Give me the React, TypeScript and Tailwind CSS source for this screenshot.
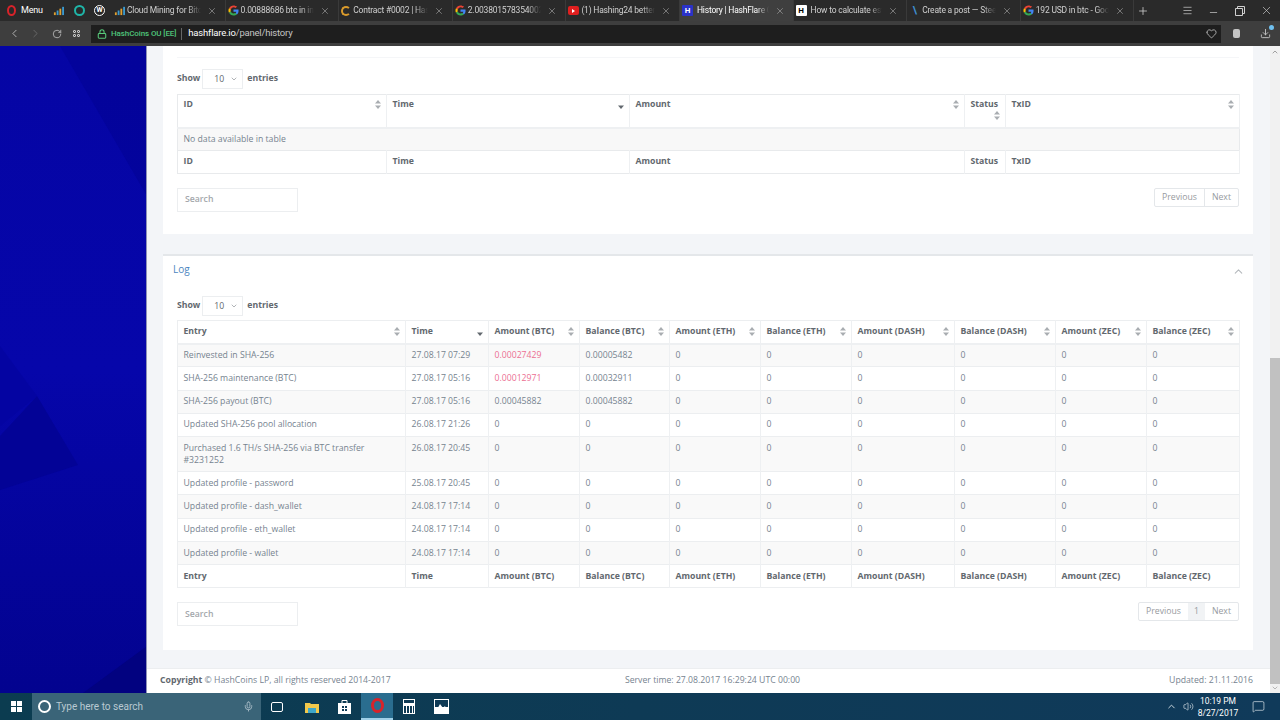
import React from "react";
import { ChevronDown, ChevronLeft, ChevronRight, ChevronUp, Download, Heart, Minus, Plus, RotateCw, Volume2, X, Mic, MessageSquare, Lock, Menu } from "lucide-react";

const GoogleIcon = () => (
	<svg width="11" height="11" viewBox="0 0 24 24" className="shrink-0">
		<path fill="#ea4335" d="M12 5c1.8 0 3.3.6 4.5 1.700l3.300-3.300C17.800 2.500 15.100 1 12 1 7.700 1 4 3.500 2.200 7.100l3.900 3C7 7.200 9.300 5 12 5z" />
		<path fill="#4285f4" d="M23 12.300c0-.8-.1-1.500-.2-2.300H12v4.500h6.200c-.3 1.400-1.100 2.600-2.300 3.400l3.600 2.800c2.200-2 3.500-5 3.500-8.400z" />
		<path fill="#fbbc05" d="M6.100 14.100C5.900 13.400 5.700 12.700 5.700 12s.2-1.400.4-2.100l-3.900-3C1.400 8.400 1 10.200 1 12s.4 3.600 1.200 5.100l3.900-3z" />
		<path fill="#34a853" d="M12 23c3 0 5.500-1 7.500-2.800l-3.600-2.800c-1 .7-2.300 1.100-3.900 1.100-2.700 0-5-1.800-5.900-4.400l-3.900 3C4 20.500 7.700 23 12 23z" />
	</svg>
);

const HashIcon = ({ dark }: { dark?: boolean }) => (
	<div className={`mr-[2px] flex h-[11px] w-[11px] shrink-0 items-center justify-center rounded-[1px] text-[8px] font-bold leading-none ${dark ? "bg-white text-black" : "bg-[#2a32c8] text-white"}`}>H</div>
);

const MiningIcon = () => (
	<svg width="11" height="11" viewBox="0 0 12 12" className="shrink-0">
		<rect x="1" y="8" width="2" height="3" fill="#e0a030" />
		<rect x="4" y="6" width="2" height="5" fill="#3a9ad0" />
		<rect x="7" y="4" width="2" height="7" fill="#e0a030" />
		<rect x="10" y="2" width="2" height="9" fill="#3a9ad0" />
	</svg>
);

const tabs = [
	{ title: "Cloud Mining for Bitc", icon: <MiningIcon /> },
	{ title: "0.00888686 btc in inr", icon: <GoogleIcon /> },
	{ title: "Contract #0002 | Hash", icon: <span className="h-[10px] w-[10px] shrink-0 rounded-full border-2 border-[#d99a2b] border-r-transparent" /> },
	{ title: "2.003801578354002/1", icon: <GoogleIcon /> },
	{ title: "(1) Hashing24 better t", icon: <span className="flex h-[9px] w-[11px] shrink-0 items-center justify-center rounded-[2px] bg-[#e01f1f]"><span className="h-0 w-0 border-y-[2px] border-l-[3px] border-y-transparent border-l-white" /></span> },
	{ title: "History | HashFlare Cl", icon: <HashIcon />, active: true },
	{ title: "How to calculate estin", icon: <HashIcon dark /> },
	{ title: "Create a post — Steer", icon: <span className="w-[11px] shrink-0 text-center text-[10px] font-bold leading-none text-[#3f8fd0]">\</span> },
	{ title: "192 USD in btc - Goog", icon: <GoogleIcon /> },
];

const SortIcon = ({ active }: { active?: boolean }) => (
	<svg width="6" height="9" viewBox="0 0 6 9" className="shrink-0">
		{!active && <path d="M3 0 6 3.500H0z" fill="#a9adb1" />}
		<path d="M3 9 0 5.500h6z" fill={active ? "#62686e" : "#a9adb1"} />
	</svg>
);

const Browser = () => (
	<div className="shrink-0 font-['Roboto',sans-serif]">
		<div className="flex h-[21px] items-center bg-[#2a2a2a] text-[8.5px] tracking-[-0.2px] text-[#cfcfcf]">
			<div className="flex w-[45px] shrink-0 items-center pl-[7px]">
				<span className="h-[11px] w-[9px] shrink-0 rounded-[50%] border-[2.5px] border-[#d8232a]" />
				<span className="ml-[5px] text-[9px] text-white">Menu</span>
			</div>
			<div className="flex w-[67px] shrink-0 items-center gap-[9.5px] pl-[8px]">
				<MiningIcon />
				<span className="h-[11px] w-[11px] shrink-0 rounded-full border-[2px] border-[#1fb5a8]" />
				<span className="flex h-[11px] w-[11px] shrink-0 items-center justify-center rounded-full border border-white text-[7px] font-bold leading-none text-white">W</span>
			</div>
			{tabs.map((tab) => (
				<div key={tab.title} className={`flex h-full w-[113.6px] shrink-0 items-center gap-[2px] border-r border-[#3a3a3a] pl-[2px] pr-[8px] ${tab.active ? "bg-[#3f3f3f] text-white" : ""}`}>
					{tab.icon}
					<span className="min-w-0 flex-1 overflow-hidden whitespace-nowrap [mask-image:linear-gradient(to_right,black_82%,transparent)]">{tab.title}</span>
					<X size={10} strokeWidth={1.5} className="ml-[4px] shrink-0 text-[#a5a5a5]" />
				</div>
			))}
			<Plus size={12} strokeWidth={1.5} className="ml-[3px] shrink-0 text-[#d8d8d8]" />
			<div className="ml-[33px] flex items-center text-[#d0d0d0]">
				<Menu size={11} strokeWidth={1.5} />
				<Minus size={11} strokeWidth={1.5} className="ml-[15px] translate-y-[2px]" />
				<svg width="10" height="10" viewBox="0 0 10 10" className="ml-[16px]" fill="none" stroke="currentColor">
					<path d="M.5 2.500h7v7h-7zM2.500 2.500v-2h7v7h-2" />
				</svg>
				<X size={13} strokeWidth={1.2} className="ml-[15px]" />
			</div>
		</div>
		<div className="flex h-[25px] items-center bg-[#3e3e3e] text-[#c8c8c8]">
			<div className="flex w-[91px] shrink-0 items-center pl-[8px]">
				<ChevronLeft size={13} strokeWidth={1.5} />
				<ChevronRight size={13} strokeWidth={1.5} className="ml-[8px] text-[#6f6f6f]" />
				<RotateCw size={10} strokeWidth={1.8} className="ml-[10px]" />
				<div className="ml-[11px] grid grid-cols-2 gap-[1px]">
					<span className="h-[3px] w-[3px] rounded-[1px] border border-[#c8c8c8]" />
					<span className="h-[3px] w-[3px] rounded-[1px] border border-[#c8c8c8]" />
					<span className="h-[3px] w-[3px] rounded-[1px] border border-[#c8c8c8]" />
					<span className="h-[3px] w-[3px] rounded-[1px] border border-[#c8c8c8]" />
				</div>
			</div>
			<div className="flex h-[18px] flex-1 items-center bg-[#1e1e1e] pl-[6px]">
				<Lock size={10} strokeWidth={2.5} className="shrink-0 text-[#58c97a]" />
				<span className="ml-[4px] text-[8px] font-medium tracking-[-0.1px] text-[#4fc47a]">HashCoins OU [EE]</span>
				<span className="ml-[5px] h-[12px] w-px bg-[#666]" />
				<span className="ml-[6px] text-[9.5px] tracking-[-0.2px] text-[#c4c4c4]"><span className="text-white">hashflare.io</span>/panel/history</span>
				<Heart size={11} strokeWidth={1.5} className="ml-auto mr-[4px] text-[#e0e0e0]" />
			</div>
			<div className="flex w-[59px] shrink-0 items-center pl-[12px]">
				<span className="h-[9px] w-[7px] rounded-[2px] bg-[#c4c4c4]" />
				<span className="relative ml-[20px]">
					<Download size={11} className="text-[#c4c4c4]" />
					<span className="absolute -right-[3px] -top-[3px] h-[5px] w-[5px] rounded-full bg-[#6fc0ef]" />
				</span>
			</div>
		</div>
	</div>
);

const logRows = [
	["Reinvested in SHA-256", "27.08.17 07:29", "0.00027429", "0.00005482", true],
	["SHA-256 maintenance (BTC)", "27.08.17 05:16", "0.00012971", "0.00032911", true],
	["SHA-256 payout (BTC)", "27.08.17 05:16", "0.00045882", "0.00045882", false],
	["Updated SHA-256 pool allocation", "26.08.17 21:26", "0", "0", false],
	["Purchased 1.6 TH/s SHA-256 via BTC transfer #3231252", "26.08.17 20:45", "0", "0", false],
	["Updated profile - password", "25.08.17 20:45", "0", "0", false],
	["Updated profile - dash_wallet", "24.08.17 17:14", "0", "0", false],
	["Updated profile - eth_wallet", "24.08.17 17:14", "0", "0", false],
	["Updated profile - wallet", "24.08.17 17:14", "0", "0", false],
] as const;

const logCols = [
	["Entry", 228],
	["Time", 83],
	["Amount (BTC)", 91],
	["Balance (BTC)", 90],
	["Amount (ETH)", 91],
	["Balance (ETH)", 91],
	["Amount (DASH)", 103],
	["Balance (DASH)", 101],
	["Amount (ZEC)", 91],
	["Balance (ZEC)", 93],
] as const;

const historyCols = [
	["ID", 209],
	["Time", 243],
	["Amount", 335],
	["Status", 41],
	["TxID", 234],
] as const;

const ShowEntries = () => (
	<div className="flex items-center font-bold text-[#62686e]">
		Show
		<div className="ml-[2px] mr-[4px] flex h-[20px] w-[41px] items-center justify-between border border-[#eceef0] pl-[11px] pr-[4px] font-normal">
			<span className="pt-[2px]">10</span>
			<ChevronDown size={8} strokeWidth={1.5} />
		</div>
		entries
	</div>
);

const SearchBox = () => (
	<div className="flex h-[24px] w-[121px] items-center border border-[#eceef0] pl-[7px] font-semibold text-[#a3a7ab]">Search</div>
);

const Pager = ({ page }: { page?: boolean }) => (
	<div className="flex h-[19px] items-center rounded-[2px] border border-[#e4e7ea] text-[#969a9e]">
		<span className="px-[7px]">Previous</span>
		{page && <span className="flex h-full items-center bg-[#f1f3f5] px-[6px]">1</span>}
		<span className={`flex h-full items-center px-[7px] ${page ? "" : "border-l border-[#e4e7ea]"}`}>Next</span>
	</div>
);

const Taskbar = () => (
	<div className="flex h-[27px] shrink-0 items-center bg-gradient-to-r from-[#0b3c50] via-[#0e3a55] to-[#103a5a] text-[#d8e2e8]">
		<div className="flex w-[32px] shrink-0 justify-center">
			<div className="grid grid-cols-2 gap-[1px]">
				<span className="h-[5px] w-[5px] bg-white" />
				<span className="h-[5px] w-[5px] bg-white" />
				<span className="h-[5px] w-[5px] bg-white" />
				<span className="h-[5px] w-[5px] bg-white" />
			</div>
		</div>
		<div className="flex h-full w-[229px] shrink-0 items-center bg-[#3a6478] pl-[6px]">
			<span className="h-[13px] w-[13px] shrink-0 rounded-full border-[2px] border-white" />
			<span className="ml-[5px] font-['Roboto',sans-serif] text-[10px] text-[#b9c9d2]">Type here to search</span>
			<Mic size={11} className="ml-auto mr-[7px] text-[#a9bcc7]" />
		</div>
		<div className="ml-[10px] h-[10px] w-[12px] shrink-0 rounded-[2px] border border-white" />
		<svg width="14" height="12" viewBox="0 0 14 12" className="ml-[22px] shrink-0">
			<path d="M0 2h5l1 1h8v9H0z" fill="#f2c94c" />
			<rect x="3" y="7" width="8" height="5" fill="#3fa7c9" />
		</svg>
		<svg width="13" height="15" viewBox="0 0 13 15" className="ml-[19px] shrink-0">
			<path d="M0 4h13v11H0z" fill="#fff" />
			<path d="M4 4V1.500h5V4" stroke="#fff" fill="none" />
			<path d="M4 7h2v2H4zM7 7h2v2H7zM4 10h2v2H4zM7 10h2v2H7z" fill="#0e3a55" />
		</svg>
		<div className="ml-[10px] flex h-full w-[32px] shrink-0 items-center justify-center border-b-2 border-[#9fd0e8] bg-[#2a6d8f]">
			<span className="h-[15px] w-[13px] rounded-[50%] border-[3px] border-[#d8232a]" />
		</div>
		<div className="ml-[10px] flex h-[15px] w-[12px] shrink-0 flex-col justify-between bg-white p-[1px]">
			<span className="h-[3px] bg-[#0e3a55]" />
			<span className="h-[7px] bg-[repeating-linear-gradient(90deg,#0e3a55_0,#0e3a55_2px,#fff_2px,#fff_3px)]" />
		</div>
		<svg width="15" height="15" viewBox="0 0 15 15" className="ml-[19px] shrink-0">
			<rect width="15" height="15" fill="#fff" />
			<rect x="1" y="1" width="13" height="7" fill="#0e3a55" />
			<path d="M1 14 6 5l3 4 2-2 3 7z" fill="#fff" />
		</svg>
		<ChevronUp size={11} className="ml-auto shrink-0" />
		<Volume2 size={11} strokeWidth={1.5} className="ml-[6px] shrink-0" />
		<div className="ml-[2px] flex w-[44px] shrink-0 flex-col items-center font-['Roboto',sans-serif] text-[8.5px] leading-[12px] text-white">
			<span>10:19 PM</span>
			<span>8/27/2017</span>
		</div>
		<MessageSquare size={13} strokeWidth={1.3} className="ml-[12px] mr-[15px] shrink-0" />
	</div>
);

export default function App() {
	return (
		<div className="flex h-[720px] w-[1280px] flex-col overflow-hidden font-['Open_Sans',sans-serif] text-[8.7px] text-[#76838f]">
			<Browser />
			<div className="flex min-h-0 flex-1">
				<div className="relative w-[147px] shrink-0 overflow-hidden border-r border-[#8f93b8] bg-gradient-to-b from-[#0505a4] via-[#0606aa] to-[#03038f]">
					<svg width="147" height="647" viewBox="0 0 147 647" className="absolute left-0 top-0">
						<path d="M60 0H147V150z" fill="#020292" fillOpacity="0.5" />
						<path d="M0 300 37 350 0 380z" fill="#0404a2" />
						<path d="M0 390 37 350 78 419 0 444z" fill="#030396" />
						<path d="M147 600V647H83z" fill="#020280" />
					</svg>
				</div>
				<div className="flex min-w-0 flex-1 flex-col bg-[#f3f5f8]">
					<div className="ml-[16px] mr-[17px] flex h-[189px] flex-col border-b border-[#f3f5f8] bg-white px-[14px]">
						<div className="mt-[11px] border-t border-[#f5f6f8]" />
						<div className="mt-[11px]"><ShowEntries /></div>
						<table className="mt-[5px] w-[1063px] table-fixed border-collapse border border-[#e8eaec]">
							<colgroup>
								{historyCols.map(([name, width]) => <col key={name} style={{ width }} />)}
							</colgroup>
							<thead>
								<tr className="h-[33px] border-b-2 border-[#eef0f2]">
									{historyCols.map(([name]) => (
										<th key={name} className="border-r border-[#eef0f2] px-[5.5px] pt-[3px] text-left align-top font-bold text-[#62686e]">
											{name === "Status" ? (
												<div className="flex flex-col items-end">
													<span className="self-start">{name}</span>
													<SortIcon />
												</div>
											) : (
												<div className="flex items-center justify-between">
													<span>{name}</span>
													<SortIcon active={name === "Time"} />
												</div>
											)}
										</th>
									))}
								</tr>
							</thead>
							<tbody>
								<tr className="h-[23px] border-b border-[#e8eaec] bg-[#f8f8f8]">
									<td colSpan={5} className="px-[5.5px]">No data available in table</td>
								</tr>
							</tbody>
							<tfoot>
								<tr className="h-[23px]">
									{historyCols.map(([name]) => (
										<th key={name} className="border-r border-[#eef0f2] px-[5.5px] text-left font-bold text-[#62686e]">{name}</th>
									))}
								</tr>
							</tfoot>
						</table>
						<div className="mt-[14px] flex items-start justify-between">
							<SearchBox />
							<Pager />
						</div>
					</div>
					<div className="ml-[16px] mr-[17px] mt-[19px] h-[396px] border-t-2 border-[#e4e7ea] bg-white px-[14px]">
						<div className="flex h-[26px] items-center justify-between">
							<span className="-ml-[4px] text-[10px] text-[#4c86c0]">Log</span>
							<ChevronUp size={13} className="-mr-[6px] translate-y-[2px] text-[#b5b9bd]" />
						</div>
						<div className="mt-[14px]"><ShowEntries /></div>
						<table className="mt-[4px] w-[1063px] table-fixed border-collapse border border-[#eceef0]">
							<colgroup>
								{logCols.map(([name, width]) => <col key={name} style={{ width }} />)}
							</colgroup>
							<thead>
								<tr className="h-[23px] border-b-2 border-[#eef0f2]">
									{logCols.map(([name]) => (
										<th key={name} className="border-r border-[#eef0f2] px-[5.5px] text-left font-bold text-[#62686e]">
											<div className="flex items-center justify-between">
												<span className="whitespace-nowrap">{name}</span>
												<SortIcon active={name === "Time"} />
											</div>
										</th>
									))}
								</tr>
							</thead>
							<tbody>
								{logRows.map(([entry, time, amount, balance, negative], i) => (
									<tr key={entry} className={`border-b border-[#eceef0] leading-[12.5px] ${entry.startsWith("Purchased") ? "h-[35px]" : "h-[23.300px]"} ${i % 2 === 0 ? "bg-[#f9f9f9]" : "bg-white"}`}>
										<td className="border-r border-[#eef0f2] px-[5.5px] pt-[4.5px] align-top">{entry}</td>
										<td className="border-r border-[#eef0f2] px-[5.5px] pt-[4.5px] align-top">{time}</td>
										<td className={`border-r border-[#eef0f2] px-[5.5px] pt-[4.5px] align-top ${negative ? "text-[#ec6f93]" : ""}`}>{amount}</td>
										<td className="border-r border-[#eef0f2] px-[5.5px] pt-[4.5px] align-top">{balance}</td>
										{[0, 1, 2, 3, 4, 5].map((n) => (
											<td key={n} className="border-r border-[#eef0f2] px-[5.5px] pt-[4.5px] align-top">0</td>
										))}
									</tr>
								))}
							</tbody>
							<tfoot>
								<tr className="h-[23px]">
									{logCols.map(([name]) => (
										<th key={name} className="border-r border-[#eef0f2] px-[5.5px] text-left font-bold whitespace-nowrap text-[#62686e]">{name}</th>
									))}
								</tr>
							</tfoot>
						</table>
						<div className="mt-[14px] flex items-start justify-between">
							<SearchBox />
							<Pager page />
						</div>
					</div>
					<div className="mt-[18px] flex h-[25px] items-center justify-between border-t border-[#eceef0] bg-white pl-[13px] pr-[17px]">
						<span className="w-[412px]"><b className="font-bold text-[#62686e]">Copyright</b> © HashCoins LP, all rights reserved 2014-2017</span>
						<span>Server time: 27.08.2017 16:29:24 UTC 00:00</span>
						<span className="w-[400px] text-right">Updated: 21.11.2016</span>
					</div>
				</div>
				<div className="flex w-[10px] shrink-0 flex-col items-center justify-between bg-[#f1f1f1] pb-[1px] pt-[2px]">
					<ChevronUp size={8} className="text-[#777]" />
					<div className="mt-auto h-[326px] w-full bg-[#c1c1c1]" />
					<ChevronDown size={8} className="text-[#999]" />
				</div>
			</div>
			<Taskbar />
		</div>
	);
}
